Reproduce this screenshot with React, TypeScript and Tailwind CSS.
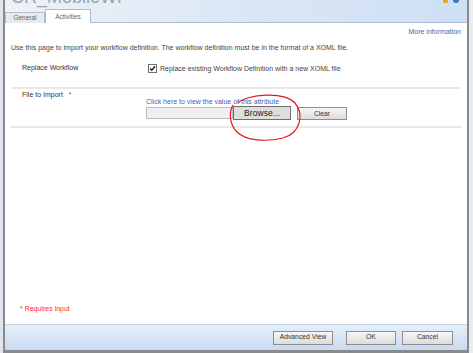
import React from "react";

function Btn({ label, className }: { label: string; className?: string }) {
  return (
    <button
      className={`flex items-center justify-center border border-[#8e8e8e] bg-gradient-to-b from-[#f7f7f7] to-[#dcdcdc] text-[6.8px] text-[#333] ${className ?? ""}`}
    >
      {label}
    </button>
  );
}

export default function App() {
  return (
    <div className="relative flex h-[353px] w-[473px] overflow-hidden bg-[#e9edf2] font-['Liberation_Sans',sans-serif]">
      {/* left window edge */}
      <div className="w-[3px] bg-[#dfe6ee]" />
      <div className="flex w-[466px] flex-col border-x-2 border-[#8a8a8a]">
        {/* header with title and tabs */}
        <div className="relative h-[23px] border-b border-[#a9bcd6] bg-gradient-to-r from-[#eef2f7] via-[#dbe7f6] to-[#cfdff4]">
          <div className="absolute left-[6px] top-[-12px] text-[18px] leading-[18px] text-[#9aa3ad]">
            CR_MobileWF
          </div>
          <div className="absolute right-[8px] top-[-3px] flex gap-[5px]">
            <div className="h-[6px] w-[5px] rounded-[1px] bg-[#e0a92a]" />
            <div className="h-[6px] w-[6px] rounded-full bg-[#3b6fc2]" />
          </div>
          <div className="absolute bottom-[-1px] left-[0px] flex items-end">
            <div className="flex h-[11px] w-[40px] items-center justify-center border border-b-0 border-[#b8bec6] bg-[#e8eaed] text-[6.5px] text-[#666]">
              General
            </div>
            <div className="flex h-[14px] w-[46px] items-center justify-center border border-b-0 border-[#a9bcd6] bg-white text-[6.5px] text-[#666]">
              Activities
            </div>
          </div>
        </div>

        {/* main content */}
        <div className="flex flex-1 flex-col bg-white px-[6px] text-[7px] leading-[9px] text-[#444]">
          <div className="mt-[4px] flex justify-end text-[#3a66b8]">More information</div>
          <div className="mt-[7px]">
            Use this page to import your workflow definition. The workflow definition must be in the format of a XOML file.
          </div>

          <div className="mt-[11px] flex h-[24px] items-start pl-[11px]">
            <div className="w-[126px] text-[#333]">Replace Workflow</div>
            <div className="mt-[1px] flex items-center gap-[3px]">
              <div className="flex h-[9px] w-[9px] items-center justify-center border border-[#6f6f6f] bg-white">
                <svg width="7" height="7" viewBox="0 0 7 7">
                  <path d="M1 3.4 L2.8 5.3 L6 1.2" fill="none" stroke="#222" strokeWidth="1.4" />
                </svg>
              </div>
              <span>Replace existing Workflow Definition with a new XOML file</span>
            </div>
          </div>

          <div className="h-[2px] bg-[#e9e9e9]" />

          <div className="mt-[1px] flex pl-[11px]">
            <div className="w-[124px] text-[#333]">
              File to Import <span className="ml-[4px] text-[#e03030]">*</span>
            </div>
            <div className="flex flex-col">
              <div className="mt-[7px] text-[#3a66b8]">Click here to view the value of this attribute</div>
              <div className="flex h-[14px] items-center">
                <div className="h-[12px] w-[87px] border border-[#bdbdbd] bg-[#f1eff1]" />
                <button className="flex h-[14px] w-[58px] items-center justify-center border border-[#6f6f6f] bg-[#dedede] text-[8.6px] text-[#222]">
                  Browse...
                </button>
                <Btn label="Clear" className="ml-[6px] h-[13px] w-[50px]" />
              </div>
            </div>
          </div>

          <div className="mt-[6px] h-[2px] bg-[#e9e9e9]" />

          <div className="mt-auto mb-[11px] pl-[9px] text-[#ff2a2a]">* Requires input</div>
        </div>

        {/* footer */}
        <div className="flex h-[26px] items-center justify-end gap-[13px] border-t border-[#c9d6e6] bg-gradient-to-b from-[#e6effb] to-[#c8daf2] pr-[14px]">
          <Btn label="Advanced View" className="h-[14px] w-[60px]" />
          <div className="flex gap-[6px]">
            <Btn label="OK" className="h-[14px] w-[50px]" />
            <Btn label="Cancel" className="h-[14px] w-[51px]" />
          </div>
        </div>
        <div className="h-[3px] bg-[#8a8a8a]" />
      </div>

      {/* red hand-drawn circle */}
      <svg className="pointer-events-none absolute left-0 top-0" width="473" height="353">
        <path
          d="M238 103 C247 94, 284 91, 295 103 C304 114, 301 133, 283 138 C266 142, 246 141, 237 132 C229 124, 229 112, 233 105"
          fill="none"
          stroke="#e11b1b"
          strokeWidth="1.2"
        />
      </svg>
    </div>
  );
}
